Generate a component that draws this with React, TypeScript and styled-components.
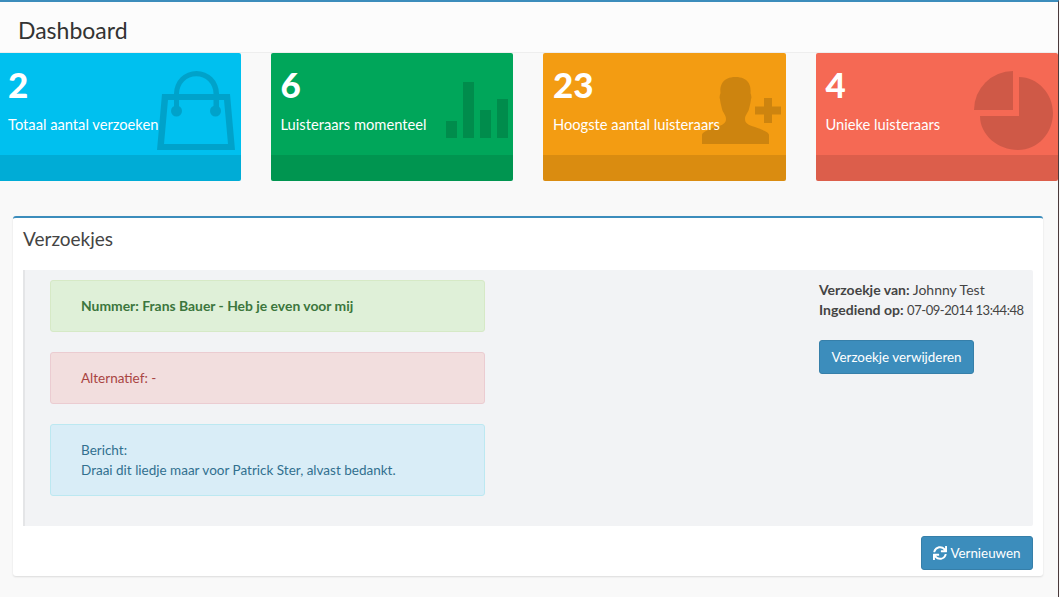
import React from "react";
import styled, { createGlobalStyle } from "styled-components";
import { FaSync } from "react-icons/fa";

const Global = createGlobalStyle`
  html, body { margin: 0; padding: 0; background: #fbfbfb; overflow: hidden; }
  #root { width: 1060px; height: 597px; overflow: hidden; }
  * { box-sizing: border-box; }
`;

const Page = styled.div`
  width: 1059px;
  height: 597px;
  background: #f9f9f9;
  border-top: 2px solid #3c8dbc;
  border-right: 1px solid #4a3a3c;
  font-family: "Lato", "Noto Sans", sans-serif;
  font-size: 14px;
  color: #444;
  overflow: hidden;
`;

const Header = styled.header`
  height: 51px;
  background: #fcfcfc;
  border-bottom: 1px solid #eee;
  padding: 12px 18px 0;
  font-size: 23px;
  line-height: 32px;
  color: #333;
`;

const Cards = styled.section`
  display: grid;
  grid-template-columns: repeat(4, 242.5px);
  column-gap: 30px;
  margin-left: -2px;
`;

const Card = styled.article<{ $bg: string }>`
  position: relative;
  height: 128px;
  border-radius: 2px;
  background: ${(p) => p.$bg};
  color: #fff;
  overflow: hidden;
  display: flex;
  flex-direction: column;
`;

const CardBody = styled.div`
  position: relative;
  z-index: 1;
  flex: 1;
  padding: 10px;
`;

const CardValue = styled.div`
  font-size: 35px;
  font-weight: 900;
  line-height: 42px;
`;

const CardLabel = styled.div`
  margin-top: 8px;
  font-size: 14.7px;
  line-height: 22px;
`;

const CardFooter = styled.div`
  height: 26px;
  background: rgba(0, 0, 0, 0.1);
`;

const CardIcon = styled.svg`
  position: absolute;
  right: 0;
  top: 0;
  width: 110px;
  height: 110px;
  fill: #000;
  opacity: 0.15;
`;

const Panel = styled.section`
  margin: 35px 15px 0 13px;
  height: 360px;
  background: #fff;
  border-top: 2px solid #3c8dbc;
  border-radius: 3px;
  box-shadow: 0 1px 2px rgba(0, 0, 0, 0.12);
  padding: 0 10px;
`;

const PanelTitle = styled.h3`
  margin: 0;
  height: 52px;
  padding-top: 9px;
  font-size: 19px;
  line-height: 24px;
  font-weight: 400;
  color: #444;
`;

const Well = styled.div`
  height: 256px;
  background: #f2f3f5;
  border-left: 2px solid #e4e5e7;
  border-radius: 0 2px 2px 0;
  padding: 10px 10px 0 25px;
  display: flex;
  justify-content: space-between;
`;

const Alerts = styled.div`
  width: 435px;
  display: flex;
  flex-direction: column;
  gap: 20px;
`;

const Alert = styled.div<{ $bg: string; $line: string; $fg: string; $bold?: boolean; $h: number }>`
  height: ${(p) => p.$h}px;
  background: ${(p) => p.$bg};
  border: 1px solid ${(p) => p.$line};
  border-radius: 3px;
  color: ${(p) => p.$fg};
  font-weight: ${(p) => (p.$bold ? 700 : 400)};
  padding: 15px 30px;
  line-height: 20px;
  font-size: ${(p) => (p.$bold ? 13.9 : 13.5)}px;
`;

const Side = styled.aside`
  width: 204px;
  line-height: 20px;
  font-size: 14px;
`;

const Meta = styled.div`
  white-space: nowrap;
  b { font-weight: 700; }
`;

const Stamp = styled.span`
  font-size: 13px;
  letter-spacing: -0.45px;
`;

const Button = styled.button`
  display: inline-flex;
  align-items: center;
  justify-content: center;
  gap: 3px;
  height: 34px;
  background: #3c8dbc;
  border: 1px solid #367fa9;
  border-radius: 3px;
  color: #fff;
  font: inherit;
  font-size: 13.4px;
  padding: 0;
`;

const DeleteButton = styled(Button)`
  width: 155px;
  margin-top: 20px;
`;

const Footer = styled.div`
  display: flex;
  justify-content: flex-end;
  padding-top: 10px;
`;

const RefreshButton = styled(Button)`
  width: 112px;
`;

export default function App() {
  return (
    <Page>
      <Global />
      <Header>Dashboard</Header>
      <Cards>
        <Card $bg="#00c0ef">
          <CardBody>
            <CardValue>2</CardValue>
            <CardLabel>Totaal aantal verzoeken</CardLabel>
          </CardBody>
          <CardFooter />
          <CardIcon viewBox="0 0 110 110">
            <path fillRule="evenodd" d="M31 41 H99 L104 97 H26 Z M37 47 L33 91 H97 L93 47 Z" />
            <path fillRule="evenodd" d="M43 58 V40.500 A22.500 22.500 0 0 1 88 40.500 V58 H82.500 V40.500 A17.250 17.250 0 0 0 48 40.500 V58 Z" />
            <circle cx="45.500" cy="58" r="5.500" />
            <circle cx="84.500" cy="58" r="5.500" />
          </CardIcon>
        </Card>
        <Card $bg="#00a65a">
          <CardBody>
            <CardValue>6</CardValue>
            <CardLabel>Luisteraars momenteel</CardLabel>
          </CardBody>
          <CardFooter />
          <CardIcon viewBox="0 0 110 110">
            <path d="M43 68 h11 v17 h-11 Z M60 29 h11 v56 h-11 Z M77 57 h11 v28 h-11 Z M94 46 h11 v39 h-11 Z" />
          </CardIcon>
        </Card>
        <Card $bg="#f39c12">
          <CardBody>
            <CardValue>23</CardValue>
            <CardLabel>Hoogste aantal luisteraars</CardLabel>
          </CardBody>
          <CardFooter />
          <CardIcon viewBox="0 0 110 110">
            <path d="M26 91 V82 C26 79 32 77 40 74 C47 72 50 70 50 66 C50 62 47 60 46 56 C45 52 44 48 44 46 C43 44 44 42 44.500 40 C44 36 44 24 59.500 24 C75 24 75 36 74.500 40 C75 42 76 44 75 46 C75 48 74 52 73 56 C72 60 69 62 69 66 C69 70 72 72 79 74 C87 77 93 79 93 82 V91 Z" />
            <path d="M88 45 h8 v8.500 h9 v8 h-9 v8.500 h-8 v-8.500 h-9 v-8 h9 Z" />
          </CardIcon>
        </Card>
        <Card $bg="#f56954">
          <CardBody>
            <CardValue>4</CardValue>
            <CardLabel>Unieke luisteraars</CardLabel>
          </CardBody>
          <CardFooter />
          <CardIcon viewBox="0 0 110 110">
            <path d="M65 18 V57 H26 A39 39 0 0 1 65 18 Z" />
            <path d="M71 24 C90 24 105 41 105 60 C105 80 90 97 70 97 C50 97 32 82 32 63 H71 Z" />
          </CardIcon>
        </Card>
      </Cards>
      <Panel>
        <PanelTitle>Verzoekjes</PanelTitle>
        <Well>
          <Alerts>
            <Alert $h={52} $bg="#dff0d8" $line="#d6e9c6" $fg="#3c763d" $bold>Nummer: Frans Bauer - Heb je even voor mij</Alert>
            <Alert $h={52} $bg="#f2dede" $line="#ebccd1" $fg="#a94442">Alternatief: -</Alert>
            <Alert $h={72} $bg="#d9edf7" $line="#bce8f1" $fg="#31708f">
              Bericht:
              <br />
              Draai dit liedje maar voor Patrick Ster, alvast bedankt.
            </Alert>
          </Alerts>
          <Side>
            <Meta><b>Verzoekje van:</b> Johnny Test</Meta>
            <Meta><b>Ingediend op:</b> <Stamp>07-09-2014 13:44:48</Stamp></Meta>
            <DeleteButton>Verzoekje verwijderen</DeleteButton>
          </Side>
        </Well>
        <Footer>
          <RefreshButton>
            <FaSync size={14} />
            Vernieuwen
          </RefreshButton>
        </Footer>
      </Panel>
    </Page>
  );
}
